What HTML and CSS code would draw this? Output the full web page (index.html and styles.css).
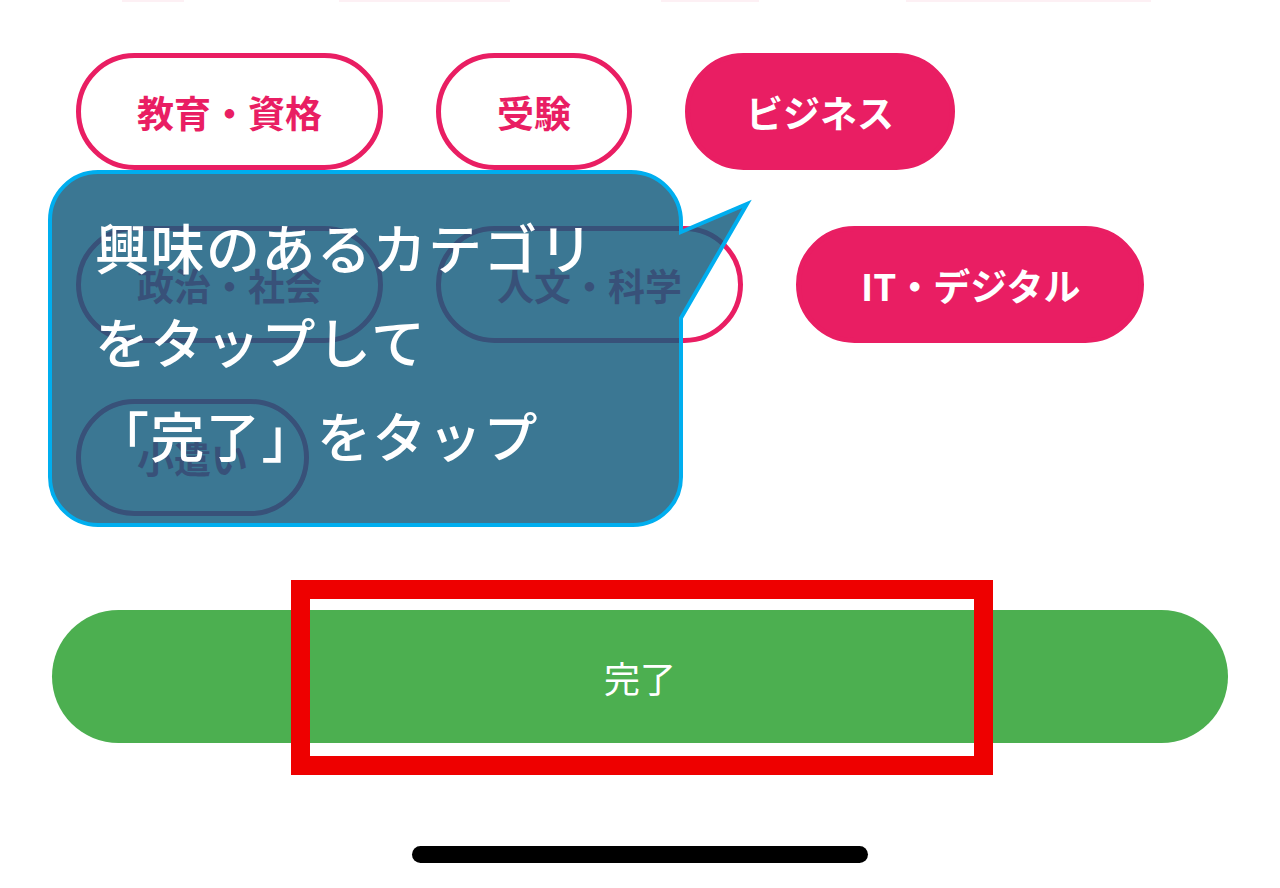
FILE: index.html
```html
<!DOCTYPE html>
<html lang="ja">
<head>
<meta charset="UTF-8">
<meta name="viewport" content="width=device-width, initial-scale=1.0">
<title>カテゴリ選択</title>
<link rel="stylesheet" href="styles.css">
</head>
<body>

<div class="screen">
    <!-- bottoms of the previous row, scrolled off -->
    <div class="edge">
        <span class="edge-bar edge-1"></span>
        <span class="edge-bar edge-2"></span>
        <span class="edge-bar edge-3"></span>
        <span class="edge-bar edge-4"></span>
    </div>

    <div class="categories">
        <div class="pill-row">
            <button class="pill">教育・資格</button>
            <button class="pill">受験</button>
            <button class="pill selected">ビジネス</button>
        </div>
        <div class="pill-row">
            <button class="pill">政治・社会</button>
            <button class="pill">人文・科学</button>
            <button class="pill selected wide">IT・デジタル</button>
        </div>
        <div class="pill-row">
            <button class="pill">小遣い</button>
        </div>
    </div>

    <div class="actions">
        <button class="done-btn">完了</button>
    </div>

    <div class="home-bar"></div>

    <!-- tutorial overlay -->
    <div class="tip">
        <svg class="tip-shape" width="706" height="362" viewBox="46 168 706 362">
            <path d="M98 172 H631 A50 50 0 0 1 681 222 V232 L747 204 L681 318 V477 A48 48 0 0 1 633 525 H98 A48 48 0 0 1 50 477 V220 A48 48 0 0 1 98 172 Z"
                  fill="rgba(19, 92, 125, 0.83)" stroke="#00aeef" stroke-width="4" stroke-linejoin="miter"/>
        </svg>
        <div class="tip-text">
            <div>興味のあるカテゴリ</div>
            <div>をタップして</div>
            <div>「完了」をタップ</div>
        </div>
    </div>
    <div class="highlight"></div>
</div>

</body>
</html>
```

FILE: styles.css
```css
body {
    margin: 0;
    padding: 0;
    background: #fff;
    font-family: "Noto Sans CJK JP", "Noto Sans", sans-serif;
}
.screen {
    position: relative;
    width: 1280px;
    height: 888px;
    overflow: hidden;
    background: #fff;
}
.edge {
    display: flex;
    height: 3px;
}
.edge-bar {
    height: 2px;
    background: #fdf0f4;
}
.edge-1 { margin-left: 122px; width: 62px; }
.edge-2 { margin-left: 155px; width: 171px; }
.edge-3 { margin-left: 151px; width: 98px; }
.edge-4 { margin-left: 147px; width: 245px; }
.categories {
    display: flex;
    flex-direction: column;
    gap: 56px;
    padding: 50px 76px 0;
}
.pill-row {
    display: flex;
    gap: 53px;
}
.pill {
    display: inline-flex;
    align-items: center;
    justify-content: center;
    box-sizing: border-box;
    height: 117px;
    padding: 0 56px;
    border: 5px solid #e91e63;
    border-radius: 60px;
    background: #fff;
    color: #e91e63;
    font-family: inherit;
    font-size: 37px;
    font-weight: 700;
    cursor: pointer;
}
.pill.selected {
    background: #e91e63;
    color: #fff;
}
.pill.wide {
    padding: 0 58px 0 60px;
}
.actions {
    margin-top: 94px;
    padding: 0 52px;
}
.done-btn {
    display: block;
    width: 100%;
    height: 133px;
    border: none;
    border-radius: 67px;
    background: #4caf50;
    color: #fff;
    font-family: inherit;
    font-size: 36px;
    font-weight: 400;
    cursor: pointer;
}
.home-bar {
    width: 456px;
    height: 17px;
    margin: 103px auto 0;
    border-radius: 9px;
    background: #000;
}
.tip {
    position: absolute;
    left: 46px;
    top: 168px;
    width: 706px;
    height: 362px;
}
.tip-shape {
    position: absolute;
    left: 0;
    top: 0;
}
.tip-text {
    position: relative;
    padding: 32px 0 0 49px;
    color: #fff;
    font-size: 54px;
    font-weight: 500;
    line-height: 94px;
    letter-spacing: 1.5px;
}
.highlight {
    position: absolute;
    left: 291px;
    top: 580px;
    width: 702px;
    height: 195px;
    box-sizing: border-box;
    border: 19px solid #ee0000;
}
```
